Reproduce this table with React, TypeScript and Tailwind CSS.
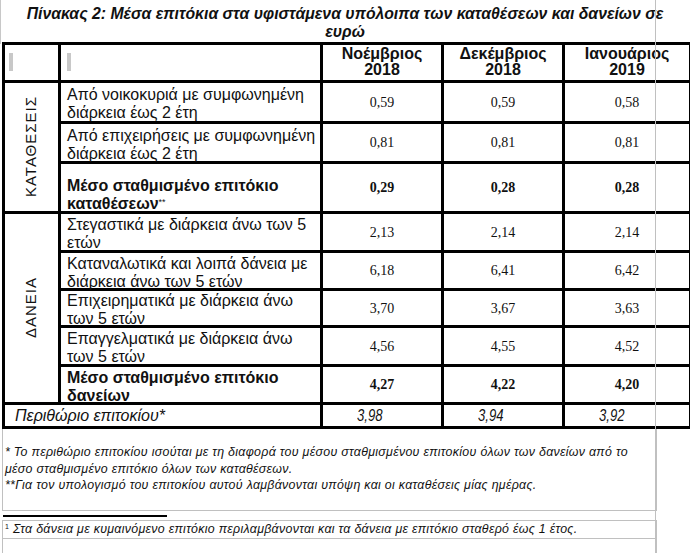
const sans = "font-['Liberation_Sans','Arial',sans-serif]";
const serif = "font-['Liberation_Serif','Times_New_Roman',serif]";

type Row = { label: string; v: string[]; bold?: boolean; h: string; note?: boolean; pad?: boolean };

const deposits: Row[] = [
  { label: "Από νοικοκυριά με συμφωνημένη διάρκεια έως 2 έτη", v: ["0,59", "0,59", "0,58"], h: "h-[41px]" },
  { label: "Από επιχειρήσεις με συμφωνημένη διάρκεια έως 2 έτη", v: ["0,81", "0,81", "0,81"], h: "h-[40px]" },
  { label: "Μέσο σταθμισμένο επιτόκιο καταθέσεων", v: ["0,29", "0,28", "0,28"], bold: true, note: true, pad: true, h: "h-[50px]" },
];

const loans: Row[] = [
  { label: "Στεγαστικά με διάρκεια άνω των 5 ετών", v: ["2,13", "2,14", "2,14"], h: "h-[39px]" },
  { label: "Καταναλωτικά και λοιπά δάνεια με διάρκεια άνω των 5 ετών", v: ["6,18", "6,41", "6,42"], h: "h-[38px]" },
  { label: "Επιχειρηματικά με διάρκεια άνω των 5 ετών", v: ["3,70", "3,67", "3,63"], h: "h-[37px]" },
  { label: "Επαγγελματικά με διάρκεια άνω των 5 ετών", v: ["4,56", "4,55", "4,52"], h: "h-[39px]" },
  { label: "Μέσο σταθμισμένο επιτόκιο δανείων", v: ["4,27", "4,22", "4,20"], bold: true, h: "h-[38px]" },
];

const cell = "border-[3px] border-black";

function LabelCell({ r }: { r: Row }) {
  return (
    <td className={`${cell} pl-[6px] pr-0 text-[16px] leading-[18px] text-[#111] ${r.bold ? "font-bold" : ""} ${r.pad ? "pt-[10px]" : ""}`}>
      <div className="h-[32px]">
        {r.label}
        {r.note && <span className="relative -top-[4px] text-[9px] leading-none font-normal">**</span>}
      </div>
    </td>
  );
}

function Values({ r }: { r: Row }) {
  return (
    <>
      {r.v.map((x, i) => (
        <td key={i} className={`${cell} ${serif} text-center text-[14px] text-[#111] ${r.bold ? "font-bold" : ""}`}>
          {x}
        </td>
      ))}
    </>
  );
}

function SideLabel({ text }: { text: string }) {
  return (
    <div className="flex justify-center items-center">
      <span className="[writing-mode:vertical-rl] rotate-180 text-[15px] tracking-[1px] text-[#111]">{text}</span>
    </div>
  );
}

export default function App() {
  return (
    <div className={`relative w-[690px] h-[553px] overflow-hidden bg-white ${sans}`}>
      <h1 className="pt-[5px] text-center text-[15.8px] leading-[18px] font-bold italic text-[#111] h-[42px] whitespace-nowrap">
        Πίνακας 2: Μέσα επιτόκια στα υφιστάμενα υπόλοιπα των καταθέσεων και δανείων σε
        <br />
        ευρώ
      </h1>

      <table className="ml-[2px] w-[687px] table-fixed border-collapse">
        <colgroup>
          <col className="w-[56px]" />
          <col className="w-[262px]" />
          <col className="w-[121px]" />
          <col className="w-[121px]" />
          <col className="w-[127px]" />
        </colgroup>
        <thead>
          <tr className="h-[38px]">
            <th className={`${cell} align-top pt-[8px] pl-[4px] text-left`}>
              <div className="w-[4px] h-[18px] bg-[#c8c8c8]" />
            </th>
            <th className={`${cell} align-top pt-[8px] pl-[6px] text-left`}>
              <div className="w-[4px] h-[18px] bg-[#c8c8c8]" />
            </th>
            {[
              ["Νοέμβριος", "2018"],
              ["Δεκέμβριος", "2018"],
              ["Ιανουάριος", "2019"],
            ].map(([m, y]) => (
              <th key={m} className={`${cell} align-top pt-[1px] text-center text-[16px] leading-[16px] font-bold text-[#111]`}>
                {m}
                <br />
                {y}
              </th>
            ))}
          </tr>
        </thead>
        <tbody>
          {deposits.map((r, i) => (
            <tr key={r.label} className={r.h}>
              {i === 0 && (
                <td rowSpan={3} className={cell}>
                  <SideLabel text="ΚΑΤΑΘΕΣΕΙΣ" />
                </td>
              )}
              <LabelCell r={r} />
              <Values r={r} />
            </tr>
          ))}
          {loans.map((r, i) => (
            <tr key={r.label} className={r.h}>
              {i === 0 && (
                <td rowSpan={5} className={cell}>
                  <SideLabel text="ΔΑΝΕΙΑ" />
                </td>
              )}
              <LabelCell r={r} />
              <Values r={r} />
            </tr>
          ))}
          <tr className="h-[24px]">
            <td colSpan={2} className={`${cell} pl-[10px] text-[16px] leading-[18px] italic text-[#111]`}>
              Περιθώριο επιτοκίου*
            </td>
            {["3,98", "3,94", "3,92"].map((x) => (
              <td key={x} className={`${cell} pl-[34px] text-left text-[16px] leading-[18px] italic text-[#111]`}>
                <span className="inline-block origin-left scale-x-[0.82]">{x}</span>
              </td>
            ))}
          </tr>
        </tbody>
      </table>

      <div className="ml-[2px] w-[655px] h-[82px] border-x border-b border-[#c0c0c0] pt-[15px] pl-[2px] text-[12.4px] leading-[16.5px] tracking-[0.3px] italic text-[#111] whitespace-nowrap">
        <p>
          * Το περιθώριο επιτοκίου ισούται με τη διαφορά του μέσου σταθμισμένου επιτοκίου όλων των δανείων από το
          <br />
          μέσο σταθμισμένο επιτόκιο όλων των καταθέσεων.
        </p>
        <p>**Για τον υπολογισμό του επιτοκίου αυτού λαμβάνονται υπόψη και οι καταθέσεις μίας ημέρας.</p>
      </div>

      <div className="ml-[3px] mt-[4px] w-[164px] h-[2px] bg-black" />

      <div className="ml-[2px] mt-[3px] w-[655px] h-[40px] border-x border-t border-[#c0c0c0]">
        <div className="h-[18px] border-b border-[#c0c0c0] pl-[2px] text-[12.4px] leading-[16px] tracking-[0.3px] italic text-[#111] whitespace-nowrap">
          <span className="relative -top-[4px] text-[7px] not-italic">1</span> Στα δάνεια με κυμαινόμενο επιτόκιο περιλαμβάνονται και τα δάνεια με επιτόκιο σταθερό έως 1 έτος.
        </div>
      </div>

      <div className="pointer-events-none absolute left-[655px] top-0 h-full w-px bg-[#c0c0c0]" />
      <div className="pointer-events-none absolute left-0 top-0 h-[44px] w-px bg-[#c8c8c8]" />
    </div>
  );
}
